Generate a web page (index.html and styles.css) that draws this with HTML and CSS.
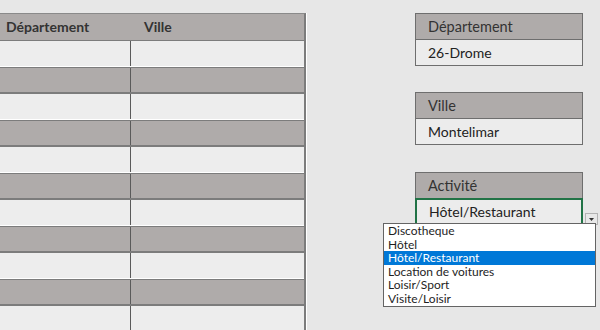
FILE: index.html
```html
<!DOCTYPE html>
<html lang="fr">
<head>
  <meta charset="UTF-8">
  <title>Recherche activités</title>
  <link rel="stylesheet" href="styles.css">
</head>
<body>
  <div class="sheet">
    <div class="table">
      <div class="row head"><div class="cell">Département</div><div class="cell">Ville</div></div>
      <div class="row"><div class="cell"></div><div class="cell"></div></div>
      <div class="row dark"><div class="cell"></div><div class="cell"></div></div>
      <div class="row"><div class="cell"></div><div class="cell"></div></div>
      <div class="row dark"><div class="cell"></div><div class="cell"></div></div>
      <div class="row"><div class="cell"></div><div class="cell"></div></div>
      <div class="row dark"><div class="cell"></div><div class="cell"></div></div>
      <div class="row"><div class="cell"></div><div class="cell"></div></div>
      <div class="row dark"><div class="cell"></div><div class="cell"></div></div>
      <div class="row"><div class="cell"></div><div class="cell"></div></div>
      <div class="row dark"><div class="cell"></div><div class="cell"></div></div>
      <div class="row"><div class="cell"></div><div class="cell"></div></div>
    </div>

    <div class="filters">
      <div class="box">
        <div class="box-title">Département</div>
        <div class="box-value">26-Drome</div>
      </div>
      <div class="box">
        <div class="box-title">Ville</div>
        <div class="box-value">Montelimar</div>
      </div>
      <div class="box active">
        <div class="box-title">Activité</div>
        <div class="box-value">Hôtel/Restaurant</div>
        <span class="drop-btn">
          <svg width="5" height="3" viewBox="0 0 5 3"><path d="M0 0h5L2.5 3z" fill="#333"/></svg>
        </span>
        <ul class="drop-list">
          <li>Discotheque</li>
          <li>Hôtel</li>
          <li class="selected">Hôtel/Restaurant</li>
          <li>Location de voitures</li>
          <li>Loisir/Sport</li>
          <li>Visite/Loisir</li>
        </ul>
      </div>
    </div>
  </div>
</body>
</html>
```

FILE: styles.css
```css
body {
  margin: 0;
  background: #e7e7e7;
  font-family: Lato, 'Open Sans', sans-serif;
  color: #333;
}
.sheet {
  display: flex;
  align-items: flex-start;
  padding-top: 13px;
  height: 317px;
  overflow: hidden;
}
.table {
  width: 304px;
  border-top: 1px solid #8a8a8a;
  border-right: 2px solid #7c7c7c;
  box-shadow: 1px 0 0 #fff;
}
.row {
  display: grid;
  grid-template-columns: 131px 1fr;
  height: 26px;
  background: #ededed;
  border-bottom: 1px solid #fff;
  box-sizing: border-box;
}
.row.dark {
  background: #afabaa;
  border-top: 1px solid #7c7c7c;
  border-bottom: 2px solid #7c7c7c;
  height: 27px;
}
.row.head {
  background: #afabaa;
  height: 27px;
  border-bottom: 1px solid #7c7c7c;
  font-weight: bold;
  font-size: 14px;
}
.cell {
  border-right: 1px solid #5a5a5a;
  padding-left: 6px;
  line-height: 26px;
}
.row.head .cell {
  border-right: none;
}
.cell:last-child {
  border-right: none;
  padding-left: 13px;
}
.filters {
  margin-left: 109px;
  width: 168px;
  display: flex;
  flex-direction: column;
  gap: 26px;
}
.box {
  position: relative;
  border: 1px solid #6e6e6e;
  font-size: 14px;
}
.box:last-child {
  margin-top: 1px;
}
.box-title {
  background: #afabaa;
  height: 25px;
  line-height: 25px;
  padding-left: 12px;
  border-bottom: 1px solid #6e6e6e;
  font-size: 14.5px;
}
.box-value {
  background: #ececec;
  height: 25px;
  line-height: 25px;
  padding-left: 12px;
  color: #222;
}
.box.active .box-title {
  border-bottom: none;
}
.box.active .box-value {
  border: 2px solid #217346;
  margin: 0 -1px -1px -1px;
  height: 25px;
  line-height: 24px;
}
.drop-btn {
  position: absolute;
  right: -16px;
  bottom: 1px;
  width: 11px;
  height: 10px;
  background: #e8e8e8;
  border: 1px solid #b3b3b3;
  display: flex;
  align-items: center;
  justify-content: center;
}
.drop-list {
  position: absolute;
  left: -33px;
  top: 50px;
  width: 211px;
  margin: 0;
  padding: 0 0 1px;
  list-style: none;
  background: #fff;
  border: 1px solid #646464;
  font-family: Lato, sans-serif;
  font-size: 12px;
  color: #1e1e1e;
}
.drop-list li {
  height: 13.5px;
  line-height: 13.5px;
  padding-left: 4px;
}
.drop-list li.selected {
  background: #0078d7;
  color: #fff;
}
```
